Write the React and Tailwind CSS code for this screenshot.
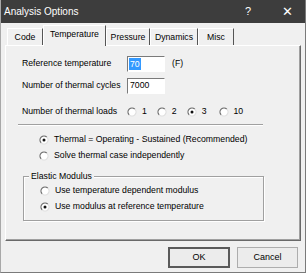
import React from 'react';

const font = { fontFamily: '"Liberation Sans", Arial, sans-serif' };

const Radio = ({ checked }) => (
  <svg width="10" height="10" viewBox="0 0 10 10" className="shrink-0">
    <circle cx="5" cy="5" r="4" fill="#ffffff" />
    <path d="M2.17 7.83 A4 4 0 0 1 7.83 2.17" fill="none" stroke="#6b6b6b" strokeWidth="1.2" />
    <path d="M7.83 2.17 A4 4 0 0 1 2.17 7.83" fill="none" stroke="#dedede" strokeWidth="1.2" />
    {checked && <circle cx="5" cy="5" r="1.5" fill="#111111" />}
  </svg>
);

const RadioLabel = ({ checked, children, className = '' }) => (
  <div className={`flex items-center gap-[5px] ${className}`}>
    <Radio checked={checked} />
    <span>{children}</span>
  </div>
);

const Tab = ({ label, selected, w }) => (
  <div
    className={`flex items-center justify-center border-l border-t border-r border-l-white border-t-white border-r-[#555555] ${w} ${
      selected ? 'relative z-10 h-[21px] -mb-px bg-[#f0f0f0] pb-[3px]' : 'h-[17px] pt-[2px]'
    }`}
  >
    {label}
  </div>
);

const Etched = ({ className = '' }) => (
  <div className={`h-[2px] border-t border-b border-t-[#a0a0a0] border-b-white ${className}`} />
);

export default function App() {
  return (
    <div
      style={font}
      className="w-[306px] h-[273px] bg-[#f0f0f0] text-[8.7px] text-black flex flex-col border-l border-r border-b border-l-[#a8a8a8] border-r-[#7a7a7a] border-b-[#7a7a7a] overflow-hidden"
    >
      {/* title bar */}
      <div className="h-[23px] shrink-0 bg-[#3d3d3d] text-white flex items-center pl-[3px] pr-[12px] text-[10px]">
        <span>Analysis Options</span>
        <span className="ml-auto mr-[31px] text-[11px]">?</span>
        <span className="text-[13px] leading-none">✕</span>
      </div>

      {/* tabs */}
      <div className="h-[22px] shrink-0 flex items-end pl-[6px]">
        <Tab label="Code" w="w-[36px]" />
        <Tab label="Temperature" w="w-[63px]" selected />
        <Tab label="Pressure" w="w-[44px]" />
        <Tab label="Dynamics" w="w-[48px]" />
        <Tab label="Misc" w="w-[36px]" />
      </div>

      {/* panel */}
      <div className="ml-[4px] w-[296px] h-[196px] shrink-0 border border-l-white border-t-white border-r-[#696969] border-b-[#696969] shadow-[inset_-1px_-1px_0_#a0a0a0] pl-[16px] pt-[9px] flex flex-col">
        <div className="flex items-center h-[17px]">
          <span className="w-[105px]">Reference temperature</span>
          <div className="w-[38px] h-[16px] bg-white border border-t-[#7a7a7a] border-l-[#7a7a7a] border-r-white border-b-white flex items-center pl-px">
            <span className="bg-[#3399ff] text-white px-px leading-[12px]">70</span>
          </div>
          <span className="ml-[7px]">(F)</span>
        </div>
        <div className="flex items-center h-[17px] mt-[5px]">
          <span className="w-[105px]">Number of thermal cycles</span>
          <div className="w-[38px] h-[16px] bg-white border border-t-[#7a7a7a] border-l-[#7a7a7a] border-r-white border-b-white flex items-center pl-[2px]">
            7000
          </div>
        </div>
        <div className="flex items-center h-[16px] mt-[10px]">
          <span className="w-[105px]">Number of thermal loads</span>
          <RadioLabel>1</RadioLabel>
          <RadioLabel className="ml-[10px]">2</RadioLabel>
          <RadioLabel checked className="ml-[10px]">3</RadioLabel>
          <RadioLabel className="ml-[12px]">10</RadioLabel>
        </div>

        <Etched className="w-[245px] -ml-[4px] mt-[4px]" />

        <div className="pl-[17px] mt-[8px] flex flex-col gap-[4px]">
          <RadioLabel checked className="h-[12px]">Thermal = Operating - Sustained (Recommended)</RadioLabel>
          <RadioLabel className="h-[12px]">Solve thermal case independently</RadioLabel>
        </div>

        {/* group box */}
        <div className="relative mt-[14px] ml-[1px] w-[241px] h-[45px] border border-[#a0a0a0] shadow-[1px_1px_0_#ffffff,inset_1px_1px_0_#ffffff] pl-[16px] pt-[8px] flex flex-col gap-[4px]">
          <span className="absolute -top-[6px] left-[5px] bg-[#f0f0f0] px-[2px] leading-[11px]">Elastic Modulus</span>
          <RadioLabel className="h-[12px]">Use temperature dependent modulus</RadioLabel>
          <RadioLabel checked className="h-[12px]">Use modulus at reference temperature</RadioLabel>
        </div>
      </div>

      {/* buttons */}
      <div className="flex justify-end gap-[7px] pr-[7px] mt-[6px]">
        <button className="w-[62px] h-[21px] bg-[#ececec] border-2 border-[#5a5a5a] text-[9px]">OK</button>
        <button className="w-[61px] h-[21px] bg-[#ececec] border border-[#adadad] text-[9px]">Cancel</button>
      </div>
    </div>
  );
}
